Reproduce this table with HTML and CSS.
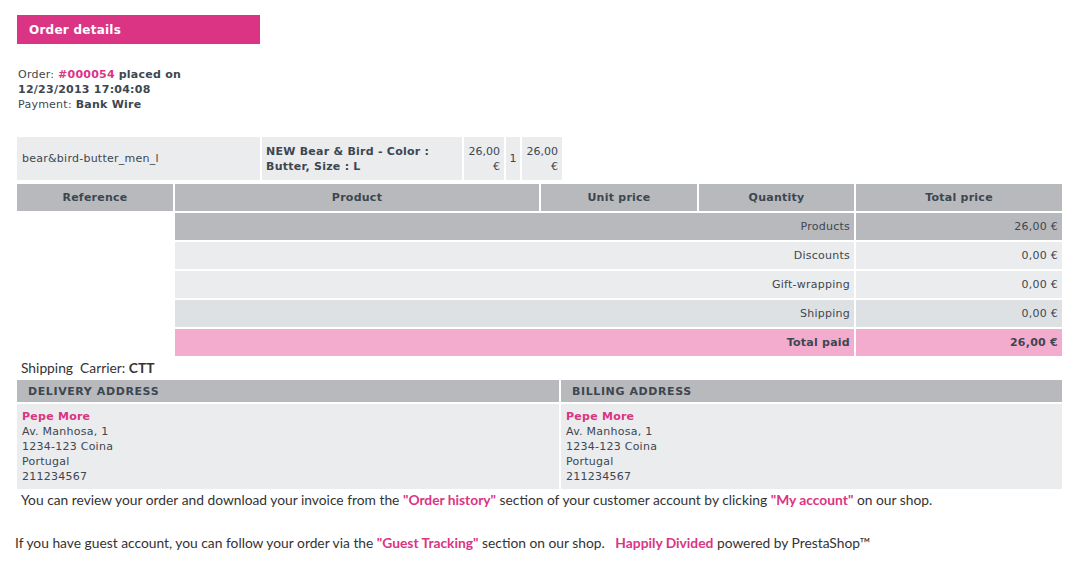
FILE: index.html
```html
<!DOCTYPE html>
<html>
<head>
<meta charset="utf-8">
<link rel="stylesheet" href="styles.css">
</head>
<body>
<div class="page">
  <div class="title-bar">Order details</div>

  <div class="order-info">
    <div>Order: <span class="pink b">#000054</span> <span class="b">placed on</span></div>
    <div class="b">12/23/2013 17:04:08</div>
    <div>Payment: <span class="b">Bank Wire</span></div>
  </div>

  <table class="items">
    <tr>
      <td class="c-ref">bear&amp;bird-butter_men_l</td>
      <td class="c-name b">NEW Bear &amp; Bird - Color : Butter, Size : L</td>
      <td class="c-price">26,00 €</td>
      <td class="c-qty">1</td>
      <td class="c-price">26,00 €</td>
    </tr>
  </table>

  <table class="summary">
    <tr class="head">
      <th class="w-ref">Reference</th>
      <th class="w-prod">Product</th>
      <th class="w-unit">Unit price</th>
      <th class="w-qty">Quantity</th>
      <th class="w-tot">Total price</th>
    </tr>
    <tr class="row grey">
      <td class="empty"></td>
      <td class="lbl" colspan="3">Products</td>
      <td class="val">26,00 €</td>
    </tr>
    <tr class="row light">
      <td class="empty"></td>
      <td class="lbl" colspan="3">Discounts</td>
      <td class="val">0,00 €</td>
    </tr>
    <tr class="row light">
      <td class="empty"></td>
      <td class="lbl" colspan="3">Gift-wrapping</td>
      <td class="val">0,00 €</td>
    </tr>
    <tr class="row blue">
      <td class="empty"></td>
      <td class="lbl" colspan="3">Shipping</td>
      <td class="val">0,00 €</td>
    </tr>
    <tr class="row pinkrow">
      <td class="empty"></td>
      <td class="lbl b" colspan="3">Total paid</td>
      <td class="val b">26,00 €</td>
    </tr>
  </table>

  <div class="carrier">Shipping&nbsp; Carrier: <b>CTT</b></div>

  <table class="addresses">
    <tr class="addr-head">
      <th class="a-left">Delivery address</th>
      <th class="a-right">Billing address</th>
    </tr>
    <tr class="addr-body">
      <td class="a-left">
        <div class="pink b">Pepe More</div>
        <div>Av. Manhosa, 1</div>
        <div>1234-123 Coina</div>
        <div>Portugal</div>
        <div>211234567</div>
      </td>
      <td class="a-right">
        <div class="pink b">Pepe More</div>
        <div>Av. Manhosa, 1</div>
        <div>1234-123 Coina</div>
        <div>Portugal</div>
        <div>211234567</div>
      </td>
    </tr>
  </table>

  <p class="note">You can review your order and download your invoice from the <b class="pink">"Order history"</b> section of your customer account by clicking <b class="pink">"My account"</b> on our shop.</p>

  <p class="footer">If you have guest account, you can follow your order via the <b class="pink">"Guest Tracking"</b> section on our shop.&nbsp;&nbsp; <b class="pink">Happily Divided</b> powered by PrestaShop™</p>
</div>
</body>
</html>
```

FILE: styles.css
```css
html, body {
  margin: 0;
  padding: 0;
  background: #ffffff;
}

.page {
  padding: 15px 13px 0 15px;
  font-family: "DejaVu Sans", Verdana, sans-serif;
  font-size: 11px;
  line-height: 15px;
  letter-spacing: 0.25px;
  color: #3c4750;
}

.b { font-weight: bold; }
.pink { color: #db3484; }

.title-bar {
  margin-left: 2px;
  width: 231px;
  height: 29px;
  line-height: 30px;
  padding-left: 12px;
  background: #db3484;
  color: #ffffff;
  font-weight: bold;
  font-size: 12px;
}

.order-info {
  margin: 23px 0 0 3px;
  width: 180px;
  line-height: 15px;
}

table {
  border-collapse: separate;
  border-spacing: 2px;
}

.items {
  margin-top: 23px;
}

.items td {
  background: #ebecee;
  height: 43px;
  padding: 0 4px;
  box-sizing: border-box;
  vertical-align: middle;
}

.items .c-ref { width: 243px; padding-left: 5px; }
.items .c-name { width: 200px; }
.items .c-price { width: 40px; text-align: right; padding: 0 4px; letter-spacing: 0; }
.items .c-qty { width: 14px; text-align: center; padding: 0; }

.summary {
  width: 1049px;
  margin-top: 0;
}

.summary td, .summary th {
  box-sizing: border-box;
  height: 27px;
  padding: 0 4px;
}

.summary .head th {
  background: #b8b9bc;
  font-weight: bold;
  text-align: center;
}

.w-ref { width: 156px; }
.w-prod { width: 364px; }
.w-unit { width: 156px; }
.w-qty { width: 155px; }
.w-tot { width: 206px; }

.summary .empty { background: transparent; }
.summary .lbl { text-align: right; }
.summary .val { text-align: right; }

.row.grey td:not(.empty) { background: #b8b9bc; }
.row.light td:not(.empty) { background: #ebecee; }
.row.blue td:not(.empty) { background: #dde1e4; }
.row.pinkrow td:not(.empty) { background: #f3acce; }

.carrier,
.note,
.footer {
  font-family: Lato, "Open Sans", sans-serif;
  font-size: 13.8px;
  line-height: 18px;
  letter-spacing: 0;
  color: #333333;
}

.carrier {
  margin: 0 0 0 6px;
  line-height: 20px;
}

.addresses {
  width: 1049px;
  margin-top: 0;
  table-layout: fixed;
}

.addresses th, .addresses td {
  box-sizing: border-box;
}

.addresses .a-left { width: 542px; }
.addresses .a-right { width: 501px; }

.addr-head th {
  background: #b8b9bc;
  height: 22px;
  padding: 0 11px;
  text-align: left;
  font-weight: bold;
  text-transform: uppercase;
  letter-spacing: 0.6px;
}

.addr-body td {
  background: #ebecee;
  height: 85px;
  padding: 5px 5px;
  vertical-align: top;
}

.note {
  margin: 0 0 0 6px;
}

.footer {
  margin: 25px 0 0 0;
}
```
